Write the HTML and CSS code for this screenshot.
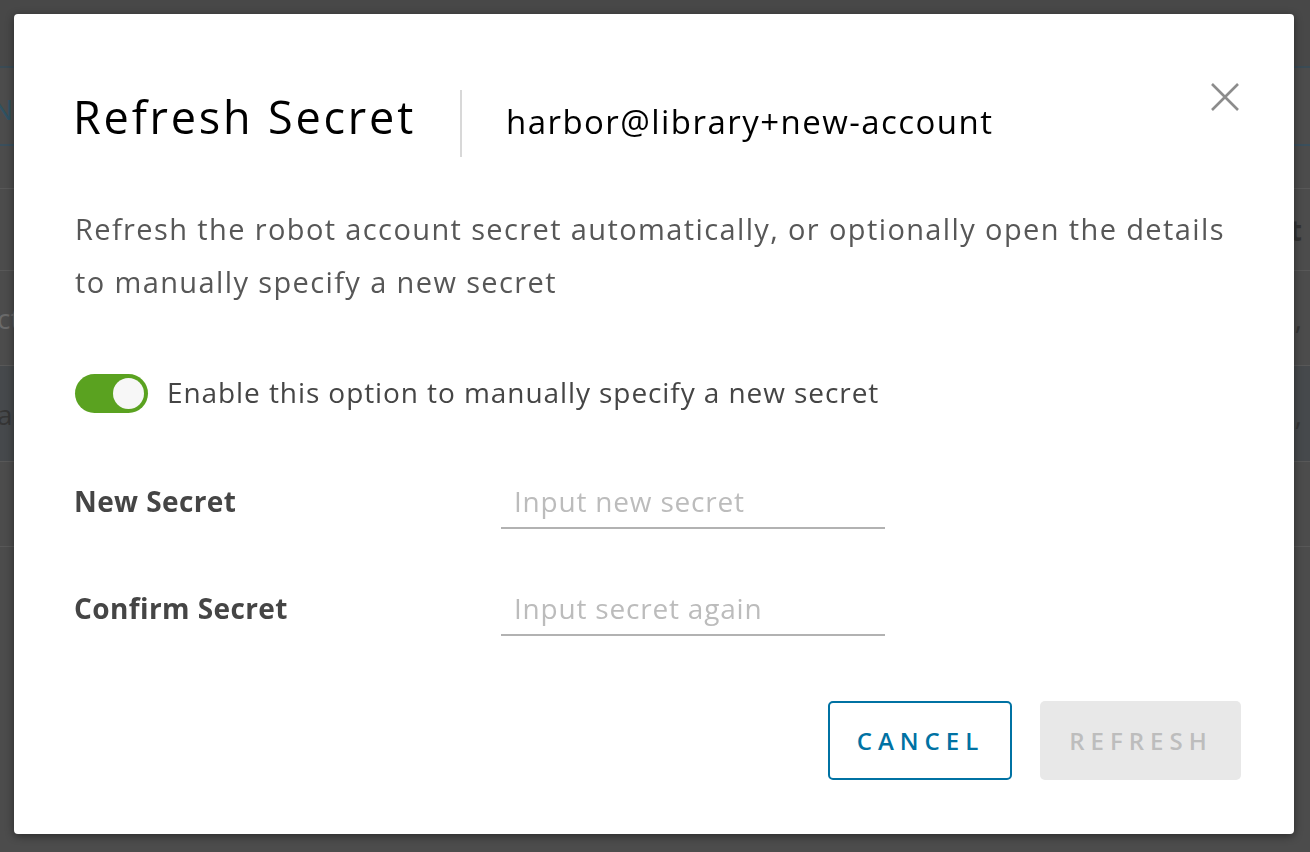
FILE: index.html
```html
<!DOCTYPE html>
<html lang="en">
<head>
<meta charset="utf-8">
<title>Refresh Secret</title>
<link rel="stylesheet" href="styles.css">
</head>
<body>
<div class="page">
  <div class="bg-row bg-top"></div>
  <div class="bg-row bg-tabs"><span class="bg-left bg-tab">NT</span></div>
  <div class="bg-row bg-toolbar"></div>
  <div class="bg-row bg-head"><span class="bg-left"></span><span class="bg-right bg-bold">t</span></div>
  <div class="bg-row bg-r1"><span class="bg-left bg-muted">ct</span><span class="bg-right bg-dark">,</span></div>
  <div class="bg-row bg-r2"><span class="bg-left bg-dark">ac</span><span class="bg-right bg-dark">,</span></div>
  <div class="bg-row bg-r3"></div>
</div>

<div class="modal" role="dialog" aria-labelledby="modal-title">
  <button class="close" type="button" aria-label="Close">
    <svg width="30" height="30" viewBox="0 0 30 30" aria-hidden="true">
      <path d="M2 2 L28 28 M28 2 L2 28" stroke="#8c8c8c" stroke-width="2.6" stroke-linecap="butt" fill="none"/>
    </svg>
  </button>
  <div class="modal-header">
    <h3 class="title" id="modal-title">Refresh Secret</h3>
    <span class="divider"></span>
    <span class="subtitle">harbor@library+new-account</span>
  </div>
  <p class="desc">Refresh the robot account secret automatically, or optionally open the details to manually specify a new secret</p>
  <label class="toggle-row">
    <span class="toggle"><span class="knob"></span></span>
    <span class="toggle-label">Enable this option to manually specify a new secret</span>
  </label>
  <div class="form">
    <div class="form-row">
      <label class="form-label" for="new-secret">New Secret</label>
      <input class="form-input" id="new-secret" type="password" placeholder="Input new secret">
    </div>
    <div class="form-row">
      <label class="form-label" for="confirm-secret">Confirm Secret</label>
      <input class="form-input" id="confirm-secret" type="password" placeholder="Input secret again">
    </div>
  </div>
  <div class="footer">
    <button class="btn btn-outline" type="button">CANCEL</button>
    <button class="btn btn-disabled" type="button" disabled>REFRESH</button>
  </div>
</div>
</body>
</html>
```

FILE: styles.css
```css
html, body {
  margin: 0;
  padding: 0;
  height: 100%;
}

body {
  background: #4c4c4c;
  font-family: "Open Sans", "Noto Sans", sans-serif;
  overflow: hidden;
}

/* dimmed page behind the modal */
.page {
  display: flex;
  flex-direction: column;
  width: 1310px;
}

.bg-row {
  display: flex;
  align-items: center;
  justify-content: space-between;
  box-sizing: border-box;
  border-bottom: 1px solid #585858;
  font-size: 28px;
  overflow: hidden;
}

.bg-top {
  height: 68px;
  background: #484848;
  border-bottom: 2px solid #3a4b55;
}

.bg-tabs {
  height: 78px;
  padding-top: 6px;
  border-bottom: 2px solid #3a4f5c;
}

.bg-toolbar {
  height: 43px;
}

.bg-head {
  height: 82px;
}

.bg-r1 {
  height: 95px;
}

.bg-r2 {
  height: 96px;
  background: #46494c;
}

.bg-r3 {
  height: 85px;
}

.bg-left {
  margin-left: -3px;
  color: #666;
}

.bg-tab {
  margin-left: -8px;
  color: #2f5263;
  letter-spacing: 1px;
}

.bg-right {
  margin-right: 8px;
  color: #333;
}

.bg-muted {
  color: #6a6a6a;
}

.bg-dark {
  color: #353535;
}

.bg-bold {
  font-weight: 700;
  color: #333;
}

/* modal */
.modal {
  position: fixed;
  left: 14px;
  top: 14px;
  width: 1280px;
  box-sizing: border-box;
  background: #fff;
  border-radius: 4px;
  padding: 76px 53px 54px 61px;
  display: flex;
  flex-direction: column;
  box-shadow: 0 2px 8px rgba(0, 0, 0, 0.45);
}

.close {
  position: absolute;
  top: 68px;
  right: 54px;
  width: 30px;
  height: 30px;
  padding: 0;
  border: 0;
  background: transparent;
  cursor: pointer;
  display: flex;
}

.modal-header {
  display: flex;
  align-items: center;
  height: 67px;
}

.title {
  margin: 0 0 14px -2px;
  font-size: 45px;
  font-weight: 400;
  letter-spacing: 2.8px;
  line-height: 1;
  color: #000;
}

.divider {
  align-self: stretch;
  width: 2px;
  background: #d8d8d8;
  margin: 0 44px 0 44px;
}

.subtitle {
  margin-bottom: 5px;
  font-size: 33px;
  letter-spacing: 1.45px;
  color: #000;
  line-height: 1;
}

.desc {
  margin: 45px 0 0;
  font-size: 29px;
  line-height: 53px;
  letter-spacing: 1.38px;
  color: #575757;
}

.toggle-row {
  margin-top: 65px;
  display: flex;
  align-items: center;
  gap: 19px;
}

.toggle {
  width: 73px;
  height: 39px;
  box-sizing: border-box;
  border-radius: 20px;
  background: #5aa220;
  padding: 4px;
  display: flex;
  justify-content: flex-end;
}

.knob {
  width: 31px;
  height: 31px;
  border-radius: 50%;
  background: #f7f7f7;
}

.toggle-label {
  margin-bottom: 3px;
  font-size: 28px;
  letter-spacing: 0.92px;
  color: #454545;
}

.form {
  margin-top: 61px;
  display: flex;
  flex-direction: column;
  gap: 53px;
}

.form-row {
  display: flex;
  align-items: center;
  height: 54px;
}

.form-label {
  width: 426px;
  margin-left: -1px;
  margin-right: 1px;
  margin-bottom: 3px;
  font-size: 28px;
  font-weight: 700;
  letter-spacing: 0.4px;
  color: #454545;
}

.form-input {
  width: 384px;
  height: 54px;
  box-sizing: border-box;
  border: 0;
  border-bottom: 2px solid #b2b2b2;
  padding: 0 13px;
  margin: 0;
  font-family: inherit;
  font-size: 28px;
  letter-spacing: 0.8px;
  color: #333;
  background: transparent;
  outline: none;
}

.form-input::placeholder {
  color: #bcbcbc;
  opacity: 1;
}

.footer {
  margin-top: 65px;
  display: flex;
  justify-content: flex-end;
  gap: 28px;
}

.btn {
  height: 79px;
  box-sizing: border-box;
  border-radius: 5px;
  font-family: inherit;
  font-size: 24px;
  font-weight: 600;
  letter-spacing: 6px;
  padding: 0 0 0 1px;
  display: flex;
  align-items: center;
  justify-content: center;
}

.btn-outline {
  width: 184px;
  border: 2px solid #0072a3;
  background: #fff;
  color: #0072a3;
  cursor: pointer;
}

.btn-disabled {
  width: 201px;
  border: 0;
  background: #e8e8e8;
  color: #bdbdbd;
}
```
